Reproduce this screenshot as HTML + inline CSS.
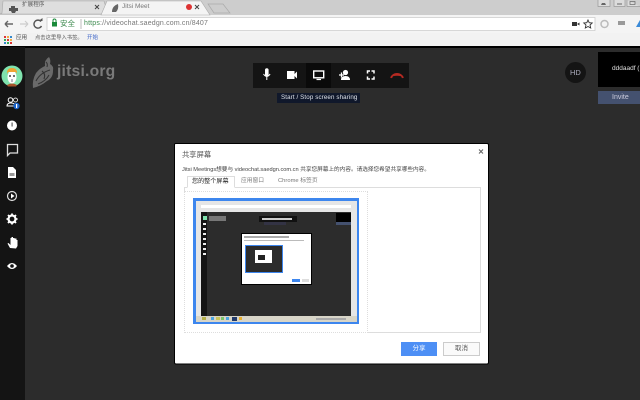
<!DOCTYPE html>
<html><head><meta charset="utf-8"><style>
html,body{margin:0;padding:0;width:640px;height:400px;overflow:hidden;background:#2c2c2c;font-family:"Liberation Sans","Noto Sans CJK SC",sans-serif}
#w{position:absolute;left:0;top:0;width:640px;height:400px;overflow:hidden;filter:blur(.35px)}
.a{position:absolute;box-sizing:border-box}
.t{position:absolute;white-space:nowrap;line-height:1}
svg{position:absolute;left:0;top:0}
</style></head><body><div id="w">
<!-- browser chrome -->
<div class="a" style="left:0;top:0;width:640px;height:15px;background:#cdcdcd"></div>
<div class="a" style="left:0;top:15px;width:640px;height:18px;background:#f4f4f4"></div>
<div class="a" style="left:0;top:33px;width:640px;height:13px;background:#f2f2f2"></div>
<div class="a" style="left:0;top:46px;width:640px;height:1.5px;background:#000"></div>
<svg width="640" height="47">
<path d="M0 14 L2 13 L3 1 H104 L108 14 Z" fill="#dedede" stroke="#aaa" stroke-width=".6"/>
<path d="M101 15 L107 1 H201 L210 15 Z" fill="#f4f4f4" stroke="#aaa" stroke-width=".6"/>
<path d="M208 4 H223 L230 13 H214 Z" fill="#cdcdcd" stroke="#aaa" stroke-width=".7"/>
<path d="M11 6 h4 v2 h3 v3 h-2 l-1 2 h-3 l-1 -2 h-2 v-3 h2 z" fill="#555"/>
<path d="M112 12 q0 -6 6 -8 q1 5 -2 8 z" fill="#666"/>
<circle cx="189" cy="7" r="3" fill="#d33"/>
<path d="M95 5 l4 4 m0 -4 l-4 4 M195 5 l4 4 m0 -4 l-4 4" stroke="#444" stroke-width="1"/>
<path d="M47 17.5 H595 V30.5 H47 Z" fill="#fff" stroke="#ccc" stroke-width=".8"/>
<path d="M12 24 H4 M4 24 l3 -3 m-3 3 l3 3" transform="translate(1,0)" stroke="#666" stroke-width="1.4" fill="none"/>
<path d="M20 24 H28 m0 0 l-3 -3 m3 3 l-3 3" stroke="#ccc" stroke-width="1.2" fill="none"/>
<path d="M41 21.5 A4 4 0 1 0 41.5 26" stroke="#555" stroke-width="1.4" fill="none"/><path d="M38.5 21 h4 v-3 z" fill="#555"/>
<rect x="52" y="22" width="5" height="4.5" fill="#1a8a3a"/>
<path d="M53 22 v-1.5 a1.5 1.5 0 0 1 3 0 v1.5" stroke="#1a8a3a" fill="none"/>
<line x1="81" y1="19" x2="81" y2="29" stroke="#bbb"/>
<rect x="572" y="22" width="5" height="4" fill="#333"/><path d="M577 24 l2.5 -1.500 v3 z" fill="#333"/>
<path d="M588 20 l1.200 2.700 3 .3 -2.200 2 .7 3 -2.700 -1.500 -2.700 1.500 .7 -3 -2.200 -2 3 -.3 z" fill="none" stroke="#333" stroke-width=".9"/>
<circle cx="604.500" cy="24" r="3.500" fill="none" stroke="#bbb" stroke-width="1.500"/>
<rect x="618" y="21" width="7" height="4" fill="#999"/>
<path d="M636 27 L640 20 V27 Z" fill="#3a8ad8"/>
<path d="M598 0 V6.500 H610 V0 M614 0 V6.500 H625 V0 M627 0 V6.500 H640" fill="#dcdcdc" stroke="#999" stroke-width=".7"/>
<path d="M601 5 h5 l-1 -2 h-3z" fill="#666"/><path d="M617 4 h5" stroke="#666"/><rect x="630" y="1.500" width="5" height="3" fill="none" stroke="#666" stroke-width=".7"/>
<g><rect x="4" y="36" width="2" height="2" fill="#d33"/><rect x="7" y="36" width="2" height="2" fill="#ea4"/><rect x="10" y="36" width="2" height="2" fill="#38c"/><rect x="4" y="39" width="2" height="2" fill="#3a5"/><rect x="7" y="39" width="2" height="2" fill="#d33"/><rect x="10" y="39" width="2" height="2" fill="#ea4"/><rect x="4" y="42" width="2" height="2" fill="#38c"/><rect x="7" y="42" width="2" height="2" fill="#3a5"/><rect x="10" y="42" width="2" height="2" fill="#d33"/></g>
</svg>
<div class="t" style="left:22px;top:3px;font-size:5.600px;color:#555">扩展程序</div>
<div class="t" style="left:122px;top:3.500px;font-size:6.500px;color:#777">Jitsi Meet</div>
<div class="t" style="left:60px;top:20px;font-size:7.500px;color:#3c8a4e">安全</div>
<div class="t" style="left:84px;top:20px;font-size:7px;letter-spacing:.17px;color:#777"><span style="color:#3c8a4e">https</span>://videochat.saedgn.com.cn/8407</div>
<div class="t" style="left:16px;top:36px;font-size:5.500px;color:#444">应用</div>
<div class="t" style="left:35px;top:36px;font-size:5.300px;color:#555">点击这里导入书签。</div>
<div class="t" style="left:87px;top:36px;font-size:5.500px;color:#3b63c8">开始</div>

<!-- sidebar -->
<div class="a" style="left:0;top:47px;width:25px;height:353px;background:#141414"></div>
<svg width="640" height="400" style="pointer-events:none">
<circle cx="12" cy="76" r="10.500" fill="#7fe3ae"/>
<path d="M7 85 q5 -3 10 0 l-1 1.500 h-8z" fill="#a5552b"/>
<ellipse cx="12" cy="77" rx="4.500" ry="6.500" fill="#fff"/>
<path d="M7 74 q-.5 -6 5 -6 q5.500 0 5 6 l-1 -2 l-8 0z" fill="#f0a432"/>
<circle cx="10" cy="76" r="1" fill="#444"/><circle cx="14" cy="76" r="1" fill="#444"/>
<path d="M12 79 v3" stroke="#778"/>
<!-- sidebar icons -->
<g fill="#fff">
<circle cx="10.500" cy="100" r="2.300" fill="none" stroke="#fff"/><circle cx="15.500" cy="100" r="2" fill="none" stroke="#fff" stroke-width=".8"/><path d="M7 106 q0 -3 4 -3 q4 0 4 3z" fill="none" stroke="#fff"/>
<circle cx="12" cy="125.500" r="5" /><rect x="11.400" y="122.500" width="1.400" height="4" fill="#777"/>
<path d="M7.500 144.500 H17.500 V153 H10 L7.500 155.500 Z" fill="none" stroke="#ddd" stroke-width="1.300"/>
<path d="M8 167 H13 L16 170 V178 H8 Z"/><rect x="9.500" y="173" width="5" height="3" fill="#999"/>
<circle cx="12" cy="196" r="4.500" fill="none" stroke="#ddd" stroke-width="1.200"/><path d="M11 193.500 L14.500 196 L11 198.500Z"/>
<circle cx="12" cy="219" r="3.500" fill="none" stroke="#fff" stroke-width="2.200"/><path d="M12 213.500v2M12 222.500v2M6.500 219h2M15.500 219h2M8 215l1.500 1.500M14.500 221.500L16 223M8 223l1.500-1.500M14.500 216.500L16 215" stroke="#fff" stroke-width="1.800"/>
<path d="M10 248 L7.500 243.500 L8.500 243 L10.500 245 V238 H11.500 V237 H13 V238 H14.500 V238.500 H16.500 V240 H17.500 V246 L16 248.500Z"/>
<path d="M7 266 Q12 260 17 266 Q12 272 7 266 Z" fill="#fff"/><circle cx="12" cy="266" r="1.800" fill="#141414"/>
</g>
<circle cx="16.500" cy="106" r="3.200" fill="#1a62c8"/><rect x="16" y="104" width="1.200" height="4" fill="#fff"/>
<!-- jitsi logo -->
<path d="M33 88 Q32 80 36 73 Q40 68 45 66 Q44 60 49 57 Q51 60 50 64 Q54 66 53 71 Q53 78 47 81 Q41 86 33 88 Z" fill="#6a6a6a"/>
<path d="M36 81 Q40 73 50 70 M38 84 Q46 81 49 75 M42 71 Q46 74 44 79 M46 62 Q48 64 47 67" stroke="#333" stroke-width="1.100" fill="none"/>
<!-- toolbar -->
<rect x="253" y="63" width="156" height="25" fill="#141414"/>
<rect x="306" y="63" width="25" height="25" fill="#0a0a0a"/>
<path d="M265 70 a1.800 1.800 0 0 1 3.600 0 v5 a1.800 1.800 0 0 1 -3.600 0 z" fill="#fff"/><path d="M263.500 74 q3.300 5 6.600 0 M266.800 77 v3" stroke="#fff" fill="none"/>
<rect x="287" y="71" width="7.500" height="8" fill="#fff"/><path d="M294.500 74 L297 71.500 V78.500 L294.500 76 Z" fill="#fff"/>
<rect x="313.700" y="71" width="10" height="6.800" fill="none" stroke="#fff" stroke-width="1.400"/><path d="M316.500 79.500 h4.500" stroke="#fff" stroke-width="1.200"/>
<circle cx="345.500" cy="72.500" r="2.600" fill="#fff"/><path d="M341 80 q0 -4 4.500 -4 q4.500 0 4.500 4z" fill="#fff"/><path d="M339 75 h5 M341.500 72.500 v5" stroke="#fff" stroke-width="1.300"/>
<path d="M367.500 73.500 v-2.500 h2.500 M371.500 71 h2.500 v2.500 M374 76.500 v2.500 h-2.500 M370 79 h-2.500 v-2.500" stroke="#fff" stroke-width="1.500" fill="none"/>
<path d="M390 77.500 q2.500 -4.500 7 -4.500 q4.500 0 7 4.500 l-2 .8 l-1 -2 q-4 -1 -8 0 l-1 2z" fill="#b52a22"/>
<path d="M174.500 144.500 Q174.500 143.500 176 143.500 H487 Q488.500 143.500 488.500 145 V362 Q488.500 364 487 364 H176 Q174.500 364 174.500 362 Z" fill="#fff" stroke="#000"/>
</svg>
<div class="t" style="left:57px;top:64px;font-size:15.700px;font-weight:bold;color:#7a7a7a;letter-spacing:.2px">jitsi.org</div>
<div class="a" style="left:277px;top:93px;width:83px;height:10px;background:#10182b"></div>
<div class="t" style="left:281px;top:95px;font-size:6.200px;letter-spacing:.12px;color:#dfe3ea">Start / Stop screen sharing</div>
<div class="a" style="left:565px;top:62px;width:21px;height:21px;border-radius:50%;background:#141414"></div>
<div class="t" style="left:570px;top:69px;font-size:7.500px;color:#aab">HD</div>
<div class="a" style="left:598px;top:52px;width:42px;height:35px;background:#000"></div>
<div class="t" style="left:612px;top:66px;font-size:6.500px;color:#e0e0e0">dddaadf (</div>
<div class="a" style="left:598px;top:91px;width:42px;height:13px;background:#44516f"></div>
<div class="t" style="left:612px;top:94px;font-size:7px;color:#ccd">Invite</div>

<!-- dialog text -->
<div class="t" style="left:182px;top:151px;font-size:7.300px;color:#555">共享屏幕</div>
<svg width="640" height="400"><path d="M479 149.500 l4 4 m0 -4 l-4 4" stroke="#666" stroke-width="1.100"/></svg>
<div class="t" style="left:182px;top:167.500px;font-size:5.650px;color:#444">Jitsi Meetings想要与 videochat.saedgn.com.cn 共享您屏幕上的内容。请选择您希望共享哪些内容。</div>
<!-- tabs -->
<div class="a" style="left:184px;top:187px;width:297px;height:146px;border:1px solid #ddd;background:#fff"></div>
<div class="a" style="left:187px;top:176px;width:48px;height:12px;border:1px solid #ddd;border-bottom:1px solid #fff;background:#fff"></div>
<div class="t" style="left:192px;top:178.500px;font-size:6.100px;color:#222">您的整个屏幕</div>
<div class="t" style="left:241px;top:178.500px;font-size:5.750px;color:#777">应用窗口</div>
<div class="t" style="left:278px;top:178.500px;font-size:5.800px;color:#777">Chrome 标签页</div>
<div class="a" style="left:184px;top:191px;width:184px;height:142px;border:1px dotted #ddd;background:#fff"></div>
<!-- preview -->
<div class="a" style="left:193px;top:198px;width:166px;height:126px;background:#3d86ee"></div>
<div class="a" style="left:195.500px;top:200.500px;width:161px;height:121px;background:#e6e6e6"></div>
<div class="a" style="left:201px;top:205px;width:150px;height:3px;background:#fff"></div>
<div class="a" style="left:201px;top:212px;width:150px;height:104px;background:#2c2c2c"></div>
<div class="a" style="left:201px;top:212px;width:6px;height:104px;background:#141414"></div>
<div class="a" style="left:195.500px;top:316px;width:161px;height:5.500px;background:#d8d5c8"></div>
<div class="a" style="left:203px;top:216px;width:4px;height:4px;background:#7fe3ae"></div>
<div class="a" style="left:203px;top:223px;width:3px;height:33px;background:repeating-linear-gradient(#eee 0 2px,#141414 2px 5px)"></div>
<div class="a" style="left:209px;top:216px;width:17px;height:5px;background:#777"></div>
<div class="a" style="left:259px;top:216px;width:38px;height:6px;background:#111"></div>
<div class="a" style="left:262px;top:218px;width:30px;height:2px;background:#ccc"></div>
<div class="a" style="left:264px;top:222px;width:22px;height:3px;background:#334"></div>
<div class="a" style="left:336px;top:213px;width:15px;height:9px;background:#000"></div>
<div class="a" style="left:336px;top:222px;width:15px;height:3px;background:#44516f"></div>
<div class="a" style="left:241px;top:233px;width:71px;height:52px;background:#fff;border:1px solid #000"></div>
<div class="a" style="left:245px;top:245px;width:38px;height:28px;background:#3d86ee;"></div>
<div class="a" style="left:246px;top:246px;width:36px;height:26px;background:#2c2c2c;"></div>
<div class="a" style="left:255px;top:250px;width:17px;height:13px;background:#fff"></div>
<div class="a" style="left:258px;top:255px;width:7px;height:5px;background:#222"></div>
<div class="a" style="left:292px;top:279px;width:8px;height:3px;background:#3d86ee"></div>
<div class="a" style="left:302px;top:279px;width:7px;height:3px;background:#ddd"></div>
<div class="a" style="left:244px;top:236px;width:45px;height:1.500px;background:#aaa"></div>
<div class="a" style="left:244px;top:240px;width:60px;height:1px;background:#bbb"></div>
<!-- mini taskbar icons -->
<div class="a" style="left:202px;top:317px;width:4px;height:3px;background:#b5b04a"></div>
<div class="a" style="left:211px;top:317px;width:3px;height:3px;background:#4ca4e0"></div>
<div class="a" style="left:216px;top:317px;width:4px;height:3px;background:#c9c45a"></div>
<div class="a" style="left:221px;top:317px;width:3px;height:3px;background:#7cc46a"></div>
<div class="a" style="left:226px;top:317px;width:3px;height:3px;background:#4ca4e0"></div>
<div class="a" style="left:232px;top:317px;width:5px;height:4px;background:#223a6a"></div>
<div class="a" style="left:239px;top:317px;width:3px;height:3px;background:#e8b030"></div>
<div class="a" style="left:316px;top:318px;width:30px;height:2px;background:#aaa"></div>
<!-- buttons -->
<div class="a" style="left:401px;top:342px;width:36px;height:14px;background:#4d8ff5;color:#fff;font-size:6.500px;line-height:14px;text-align:center">分享</div>
<div class="a" style="left:443px;top:342px;width:37px;height:14px;background:#fafafa;border:1px solid #ccc;color:#555;font-size:6.500px;line-height:12px;text-align:center">取消</div>
</div></body></html>
